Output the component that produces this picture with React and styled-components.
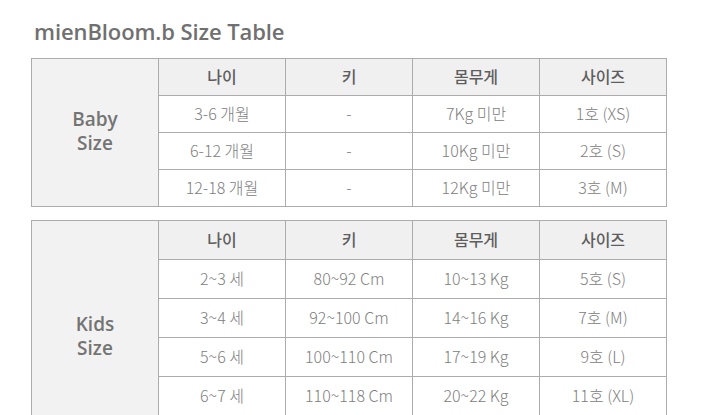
import React from 'react';
import styled, { createGlobalStyle } from 'styled-components';

const GlobalStyle = createGlobalStyle`
  html, body {
    margin: 0;
    padding: 0;
    background: #fff;
  }
  body {
    font-family: "Open Sans", "Noto Sans CJK KR", sans-serif;
  }
`;

const Page = styled.div`
  padding: 18px 0 0 31px;
  width: 720px;
  height: 415px;
  box-sizing: border-box;
  overflow: hidden;
`;

const Title = styled.h1`
  margin: 0 0 14px 3px;
  font-size: 22px;
  line-height: 26px;
  font-weight: 600;
  color: #707070;
  letter-spacing: -0.1px;
`;

const Table = styled.table`
  width: 636px;
  table-layout: fixed;
  border-collapse: collapse;
  margin-bottom: 13px;
  font-family: "Noto Sans CJK KR", "Open Sans", sans-serif;
`;

const Cell = styled.td`
  border: 1px solid #acacac;
  height: ${p => p.$h - 2}px;
  padding: 0 0 2px;
  text-align: center;
  vertical-align: middle;
  font-size: 16px;
  font-weight: 300;
  color: #808080;
`;

const HeadCell = styled(Cell)`
  background: #f0f0f0;
  font-weight: 500;
  color: #5e5e5e;
`;

const GroupCell = styled.th`
  border: 1px solid #acacac;
  background: #f2f2f2;
  padding: 0 0 4px;
  font-family: "Open Sans", sans-serif;
  font-size: 19px;
  line-height: 24px;
  font-weight: 600;
  color: #747474;
`;

const headers = ['나이', '키', '몸무게', '사이즈'];

const baby = [
  ['3-6 개월', '-', '7Kg 미만', '1호 (XS)'],
  ['6-12 개월', '-', '10Kg 미만', '2호 (S)'],
  ['12-18 개월', '-', '12Kg 미만', '3호 (M)'],
];

// the last row sits below the visible area; it only keeps the table's full height
const kids = [
  ['2~3 세', '80~92 Cm', '10~13 Kg', '5호 (S)'],
  ['3~4 세', '92~100 Cm', '14~16 Kg', '7호 (M)'],
  ['5~6 세', '100~110 Cm', '17~19 Kg', '9호 (L)'],
  ['6~7 세', '110~118 Cm', '20~22 Kg', '11호 (XL)'],
  ['', '', '', ''],
];

function SizeTable({ label, rows, rowH }) {
  return (
    <Table>
      <colgroup>
        {[0, 1, 2, 3, 4].map(i => <col key={i} style={{ width: 127 }} />)}
      </colgroup>
      <tbody>
        <tr>
          <GroupCell rowSpan={rows.length + 1}>
            {label[0]}<br />{label[1]}
          </GroupCell>
          {headers.map(h => <HeadCell key={h} $h={rowH}>{h}</HeadCell>)}
        </tr>
        {rows.map((r, i) => (
          <tr key={i}>
            {r.map((c, j) => <Cell key={j} $h={rowH}>{c}</Cell>)}
          </tr>
        ))}
      </tbody>
    </Table>
  );
}

export default function App() {
  return (
    <>
      <GlobalStyle />
      <Page>
        <Title>mienBloom.b Size Table</Title>
        <SizeTable label={['Baby', 'Size']} rows={baby} rowH={36} />
        <SizeTable label={['Kids', 'Size']} rows={kids} rowH={38} />
      </Page>
    </>
  );
}
